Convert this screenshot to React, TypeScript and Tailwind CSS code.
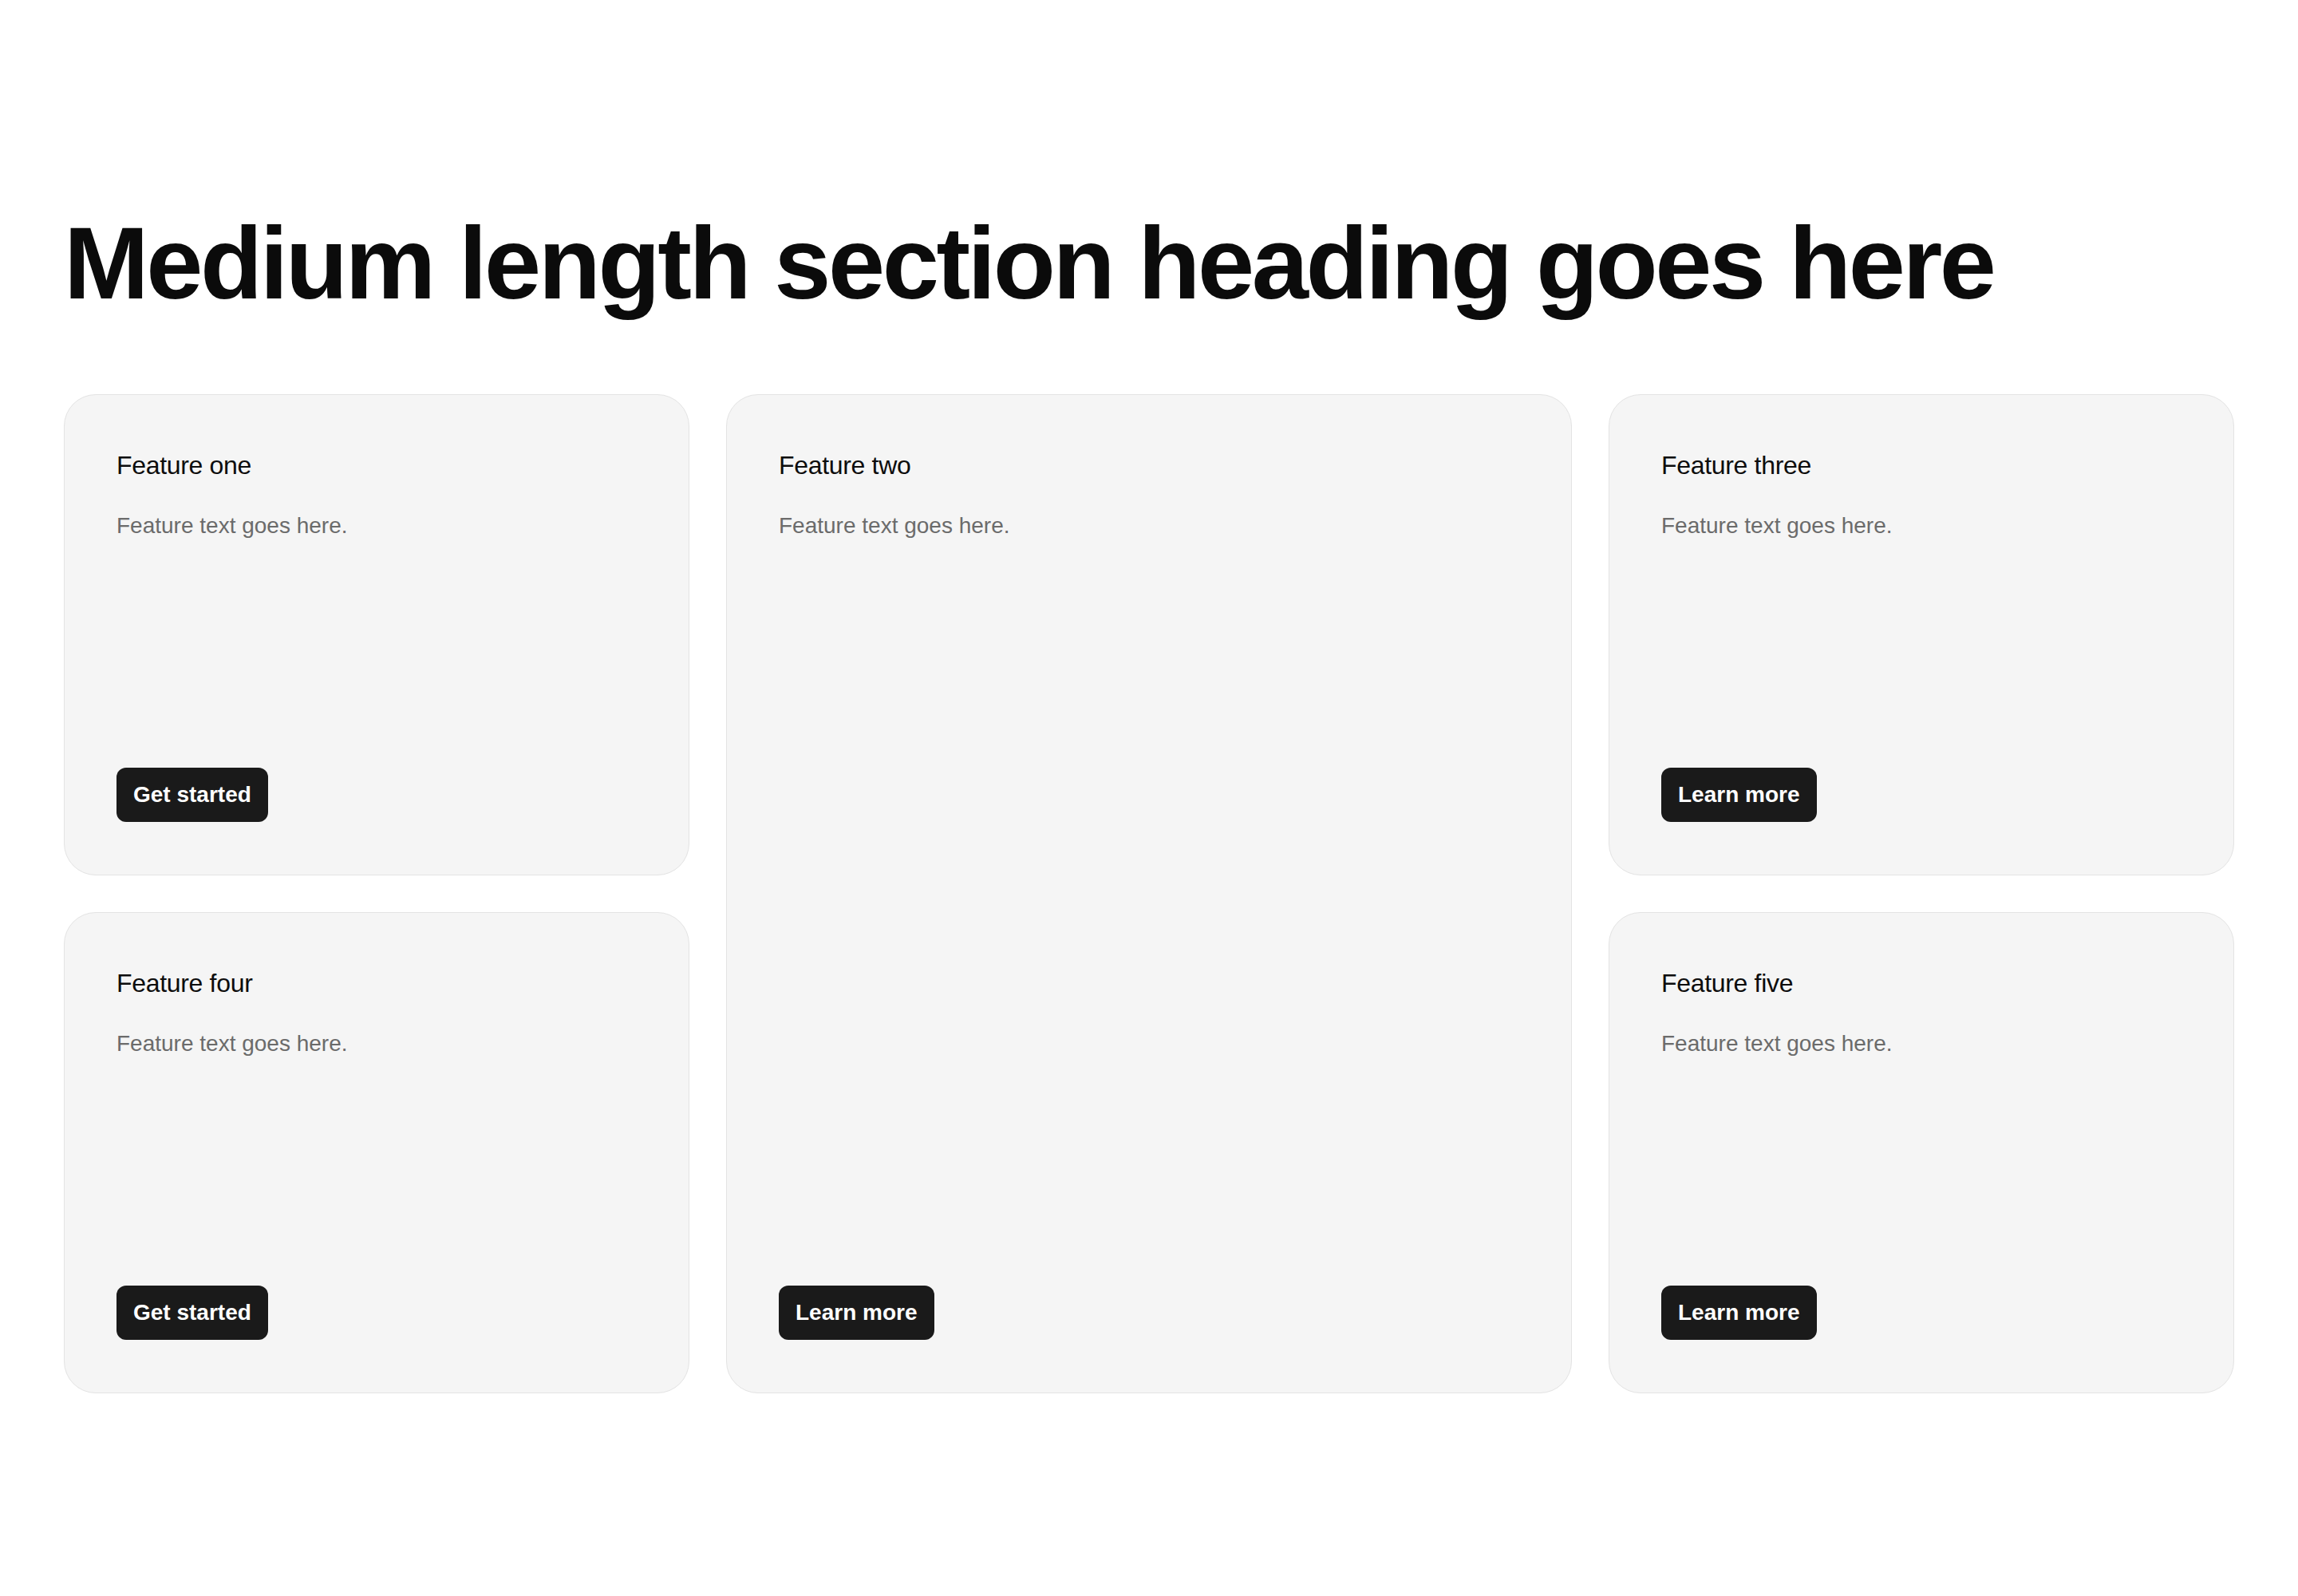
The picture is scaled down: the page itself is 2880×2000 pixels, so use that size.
import React from "react";

type Feature = {
  title: string;
  text: string;
  cta: string;
  area: string;
};

const features: Feature[] = [
  { title: "Feature one", text: "Feature text goes here.", cta: "Get started", area: "col-start-1 row-start-1" },
  { title: "Feature two", text: "Feature text goes here.", cta: "Learn more", area: "col-start-2 row-start-1 row-span-2" },
  { title: "Feature three", text: "Feature text goes here.", cta: "Learn more", area: "col-start-3 row-start-1" },
  { title: "Feature four", text: "Feature text goes here.", cta: "Get started", area: "col-start-1 row-start-2" },
  { title: "Feature five", text: "Feature text goes here.", cta: "Learn more", area: "col-start-3 row-start-2" },
];

function FeatureCard({ title, text, cta, area }: Feature) {
  return (
    <div
      className={`${area} flex flex-col justify-between rounded-[40px] border border-[#e3e3e3] bg-[#f5f5f5] px-[65px] pt-[64px] pb-[66px]`}
    >
      <div className="flex flex-col gap-[31px]">
        <h3 className="text-[32px] leading-[1.5] tracking-[-0.01em] text-[#0d0d0d]">{title}</h3>
        <p className="text-[28px] leading-[1.5] text-[#6b6b6b]">{text}</p>
      </div>
      <div>
        <button className="rounded-[12px] bg-[#1a1a1a] px-[21px] py-[13px] text-[28px] font-bold leading-[1.5] text-white">
          {cta}
        </button>
      </div>
    </div>
  );
}

export default function App() {
  return (
    <div
      className="min-h-screen w-full bg-white px-[80px] pt-[266px] pb-[250px]"
      style={{ fontFamily: '"Liberation Sans", Arial, sans-serif' }}
    >
      <h2 className="text-[128px] font-bold leading-none tracking-[-0.027em] text-[#0b0b0b]">
        Medium length section heading goes here
      </h2>

      <div className="mt-[100px] grid grid-cols-[784px_1fr_784px] grid-rows-[603px_603px] gap-[46px]">
        {features.map((f) => (
          <FeatureCard key={f.title} {...f} />
        ))}
      </div>
    </div>
  );
}
